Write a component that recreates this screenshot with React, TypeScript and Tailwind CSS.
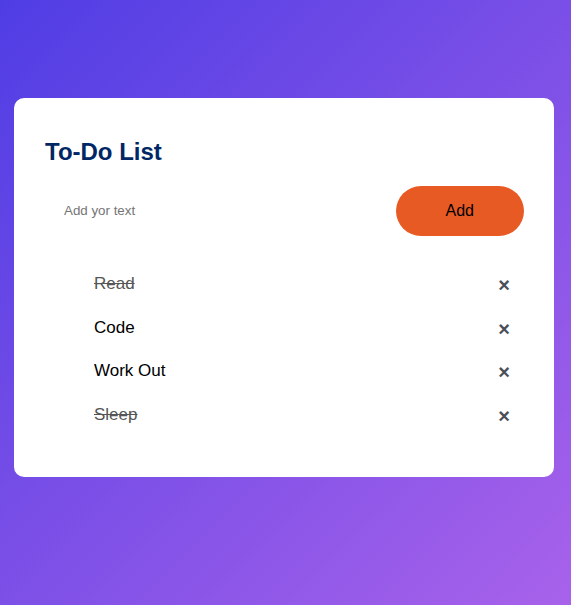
import React, { useState } from "react";

type Item = { text: string; checked: boolean };

export default function App() {
  const [items, setItems] = useState<Item[]>([
    { text: "Read", checked: true },
    { text: "Code", checked: false },
    { text: "Work Out", checked: false },
    { text: "Sleep", checked: true },
  ]);
  const [value, setValue] = useState("");

  return (
    <div
      className="min-h-screen w-full pt-[98px] pb-5 bg-[linear-gradient(135deg,#4f3de4,#a862ea)]"
      style={{ fontFamily: '"Liberation Sans", Arial, sans-serif' }}
    >
      <div className="w-[540px] ml-[14px] bg-white rounded-[10px] pt-[40px] px-[30px] pb-[41px]">
        <h2 className="text-[24px] font-bold text-[#002765] leading-[27px] mb-[21px] pl-[1px]">
          To-Do List
        </h2>
        <div className="flex items-center justify-between rounded-[30px] pl-[10px] mb-[26px]">
          <input
            type="text"
            value={value}
            onChange={(e) => setValue(e.target.value)}
            placeholder="Add yor text"
            className="flex-1 border-none outline-none bg-transparent p-[10px] text-[13.33px] text-black placeholder:text-[#757575]"
          />
          <button
            onClick={() => {
              if (value.trim()) {
                setItems([...items, { text: value, checked: false }]);
                setValue("");
              }
            }}
            className="border-none outline-none py-[16px] px-[50px] bg-[#e85a24] text-black text-[16px] leading-[18px] rounded-[40px] cursor-pointer"
          >
            Add
          </button>
        </div>
        <ul>
          {items.map((it, i) => (
            <li
              key={i}
              onClick={() =>
                setItems(items.map((x, j) => (j === i ? { ...x, checked: !x.checked } : x)))
              }
              className={
                "relative list-none text-[17px] leading-[19.5px] pt-[12px] pb-[12px] pr-[8px] pl-[50px] select-none cursor-pointer " +
                (it.checked ? "text-[#555] line-through" : "text-black")
              }
            >
              {it.text}
              <span
                onClick={(e) => {
                  e.stopPropagation();
                  setItems(items.filter((_, j) => j !== i));
                }}
                className="absolute right-0 top-[3px] w-[40px] h-[40px] text-[20px] font-bold leading-[40px] text-center text-[#4a4f5a] no-underline rounded-full"
              >
                ×
              </span>
            </li>
          ))}
        </ul>
      </div>
    </div>
  );
}
